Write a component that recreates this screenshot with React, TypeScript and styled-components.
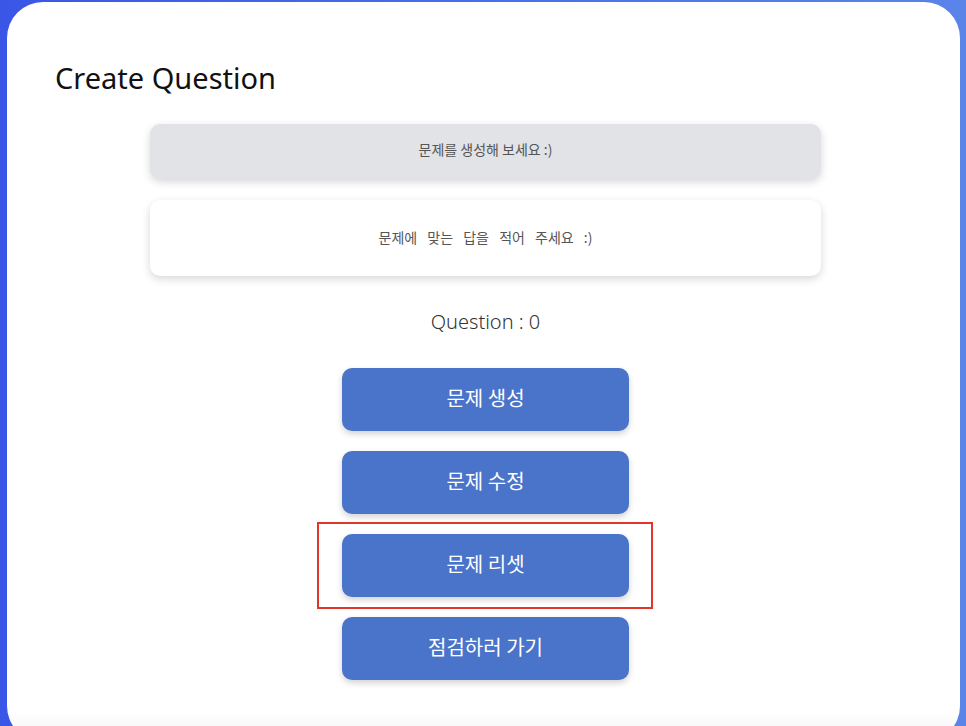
import { ReactElement } from "react";
import styled, { createGlobalStyle } from "styled-components";

const GlobalStyle = createGlobalStyle`
    html, body {
        margin: 0;
        padding: 0;
        height: 100%;
        overflow: hidden;
    }
    body {
        background: linear-gradient(90deg, #3a56e6 0%, #4a6ee8 50%, #5a84e8 100%);
        font-family: "Noto Sans", "Noto Sans CJK KR", sans-serif;
    }
`;

const Card = styled.main`
    box-sizing: border-box;
    margin: 2px 0 0 7px;
    width: 953px;
    height: 740px;
    background: linear-gradient(180deg, #ffffff 0%, #ffffff 96%, #f1f1f1 100%);
    border-radius: 36px;
    padding: 56px 0 0;
    display: flex;
    flex-direction: column;
    align-items: center;
`;

const Title = styled.h1`
    align-self: flex-start;
    margin: 0 0 0 48px;
    font-family: "Noto Sans", sans-serif;
    font-weight: 400;
    font-size: 29px;
    line-height: 40px;
    color: #111;
`;

const Field = styled.div<{ $filled?: boolean; $tall?: boolean }>`
    box-sizing: border-box;
    width: 671px;
    height: ${p => (p.$tall ? 76 : 55)}px;
    margin: ${p => (p.$tall ? "21px" : "26px")} 0 0 4px;
    padding-bottom: ${p => (p.$tall ? 3 : 5)}px;
    border-radius: 10px;
    background: ${p => (p.$filled ? "#e1e3e7" : "#ffffff")};
    box-shadow: 0 3px 8px rgba(0, 0, 0, 0.16);
    display: flex;
    align-items: center;
    justify-content: center;
    font-family: "Noto Sans CJK KR", sans-serif;
    font-size: 14px;
    color: #555;
    word-spacing: ${p => (p.$tall ? "7px" : "0")};
`;

const Counter = styled.div`
    margin: 30px 0 0 4px;
    font-family: "Noto Sans", sans-serif;
    font-weight: 300;
    font-size: 20px;
    line-height: 32px;
    color: #333;
`;

const Buttons = styled.div`
    margin: 30px 0 0 4px;
    display: flex;
    flex-direction: column;
    gap: 20px;
`;

const Highlight = styled.div`
    position: relative;
    &::after {
        content: "";
        position: absolute;
        left: -25px;
        right: -24px;
        top: -12px;
        bottom: -12px;
        border: 2px solid #e3362b;
        pointer-events: none;
    }
`;

const ActionButton = styled.button`
    display: block;
    width: 287px;
    height: 63px;
    padding: 0 0 5px;
    border: none;
    border-radius: 10px;
    background: #4a74c9;
    box-shadow: 0 3px 6px rgba(0, 0, 0, 0.18);
    color: #ffffff;
    font-family: "Noto Sans CJK KR", sans-serif;
    font-size: 20px;
    font-weight: 400;
    cursor: pointer;
`;

export default function App(): ReactElement {
    return (
        <>
            <GlobalStyle />
            <Card>
                <Title>Create Question</Title>
                <Field $filled>문제를 생성해 보세요 :)</Field>
                <Field $tall>문제에 맞는 답을 적어 주세요 :)</Field>
                <Counter>Question : 0</Counter>
                <Buttons>
                    <ActionButton>문제 생성</ActionButton>
                    <ActionButton>문제 수정</ActionButton>
                    <Highlight>
                        <ActionButton>문제 리셋</ActionButton>
                    </Highlight>
                    <ActionButton>점검하러 가기</ActionButton>
                </Buttons>
            </Card>
        </>
    );
}
